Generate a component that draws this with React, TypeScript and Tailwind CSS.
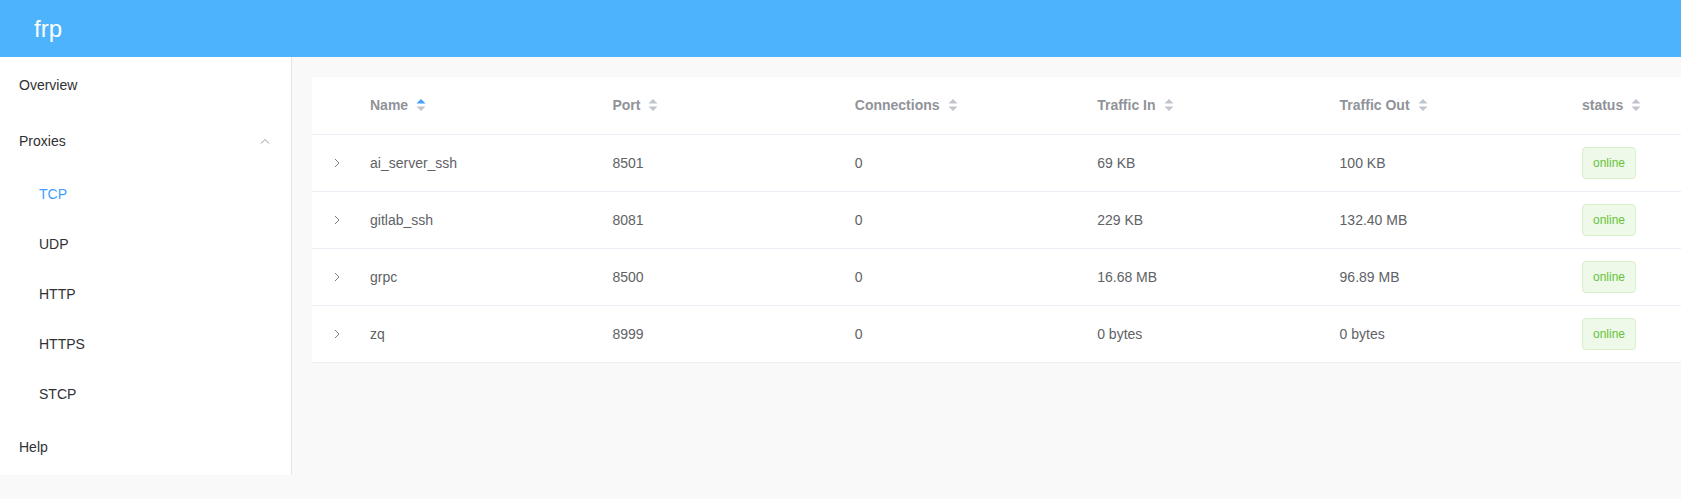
import React from "react";

type Proxy = {
  name: string;
  port: string;
  conns: string;
  trafficIn: string;
  trafficOut: string;
  status: string;
};

const proxies: Proxy[] = [
  { name: "ai_server_ssh", port: "8501", conns: "0", trafficIn: "69 KB", trafficOut: "100 KB", status: "online" },
  { name: "gitlab_ssh", port: "8081", conns: "0", trafficIn: "229 KB", trafficOut: "132.40 MB", status: "online" },
  { name: "grpc", port: "8500", conns: "0", trafficIn: "16.68 MB", trafficOut: "96.89 MB", status: "online" },
  { name: "zq", port: "8999", conns: "0", trafficIn: "0 bytes", trafficOut: "0 bytes", status: "online" },
];

const columns = ["Name", "Port", "Connections", "Traffic In", "Traffic Out", "status"];

const SortCaret = ({ active }: { active?: boolean }) => (
  <svg width="10" height="14" viewBox="0 0 10 14" className="ml-2 shrink-0">
    <path d="M5 1 L9.5 5.5 L0.5 5.5 Z" fill={active ? "#409eff" : "#c0c4cc"} />
    <path d="M5 13 L9.5 8.5 L0.5 8.5 Z" fill="#c0c4cc" />
  </svg>
);

const Sidebar = () => {
  const sub = ["TCP", "UDP", "HTTP", "HTTPS", "STCP"];
  return (
    <aside className="w-[292px] shrink-0 self-start bg-white border-r border-[#e6e6e6] text-sm text-[#303133]">
      <div className="h-14 flex items-center pl-[19px]">Overview</div>
      <div className="h-14 flex items-center justify-between pl-[19px] pr-[21px]">
        <span>Proxies</span>
        <svg width="10" height="6" viewBox="0 0 10 6">
          <path d="M1 5.5 L5 1.5 L9 5.5" fill="none" stroke="#909399" strokeWidth="1" />
        </svg>
      </div>
      {sub.map((s, i) => (
        <div
          key={s}
          className={
            "h-[50px] flex items-center pl-[39px] " + (i === 0 ? "text-[#409eff]" : "")
          }
        >
          {s}
        </div>
      ))}
      <div className="h-14 flex items-center pl-[19px]">Help</div>
    </aside>
  );
};

export default function App() {
  const grid = "grid grid-cols-[48px_repeat(6,242.4px)] items-center";
  return (
    <div
      className="h-screen overflow-hidden bg-[#f9f9f9] flex flex-col"
      style={{ fontFamily: '"Liberation Sans", Arial, sans-serif' }}
    >
      <header className="h-[57px] shrink-0 bg-[#4db3fd] flex items-center pl-[34px] text-white text-2xl">
        frp
      </header>
      <div className="flex flex-1">
        <Sidebar />
        <main className="flex-1 min-w-0 pl-5 pt-5 overflow-hidden">
          <div className="bg-white w-[1500px] text-sm">
            <div className={grid + " h-[58px] pb-px border-b border-[#ebeef5] text-[#909399] font-bold"}>
              <div />
              {columns.map((c, i) => (
                <div key={c} className="flex items-center px-2.5">
                  <span>{c}</span>
                  <SortCaret active={i === 0} />
                </div>
              ))}
            </div>
            {proxies.map((p) => (
              <div key={p.name} className={grid + " h-[57px] border-b border-[#ebeef5] text-[#606266]"}>
                <div className="flex justify-center pl-[2px]">
                  <svg width="6" height="10" viewBox="0 0 6 10">
                    <path d="M1 1 L5 5 L1 9" fill="none" stroke="#7a7c80" strokeWidth="1" />
                  </svg>
                </div>
                <div className="px-2.5">{p.name}</div>
                <div className="px-2.5">{p.port}</div>
                <div className="px-2.5">{p.conns}</div>
                <div className="px-2.5">{p.trafficIn}</div>
                <div className="px-2.5">{p.trafficOut}</div>
                <div className="px-2.5">
                  <span className="inline-flex h-8 items-center px-2.5 rounded border border-[#d6f0c9] bg-[#eef9e9] text-xs text-[#67c23a]">
                    {p.status}
                  </span>
                </div>
              </div>
            ))}
          </div>
        </main>
      </div>
    </div>
  );
}
